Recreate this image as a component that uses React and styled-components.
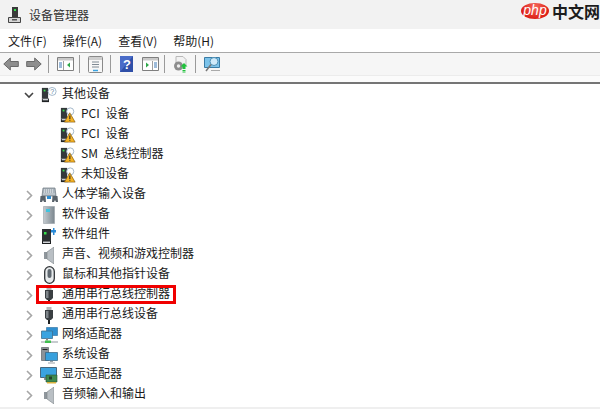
import styled, { createGlobalStyle } from "styled-components";

const GlobalStyle = createGlobalStyle`
  html, body { margin: 0; padding: 0; background: #fff; }
  body { font-family: "Noto Sans CJK SC", "Noto Sans", sans-serif; color: #1a1a1a; }
`;

const Win = styled.div`
  position: relative;
  width: 600px;
  height: 409px;
  overflow: hidden;
  background: #fff;
`;

const TitleBar = styled.div`
  height: 29px;
  display: flex;
  align-items: center;
  gap: 7px;
  padding-left: 7px;
  background: #f2f2f2;
  font-size: 12px;
  color: #333;
`;

const MenuBar = styled.div`
  height: 23px;
  display: flex;
  align-items: center;
  gap: 16px;
  padding-left: 8px;
  border-bottom: 1px solid #a9a9a9;
  background: #fff;
  font-size: 12px;
  line-height: 23px;
`;

const ToolBar = styled.div`
  height: 22px;
  display: flex;
  align-items: center;
  padding-left: 3px;
  background: #f6f6f6;
`;

const ToolGroup = styled.div`
  display: flex;
  align-items: center;
  gap: ${(p) => p.$gap || 0}px;
  padding-right: ${(p) => p.$pad || 0}px;
  margin-right: 8px;
  height: 18px;
  border-right: ${(p) => (p.$last ? "none" : "1px solid #9a9a9a")};
`;

const ToolEnd = styled.div`
  height: 6px;
  background: #fbfbfb;
  border-top: 1px solid #ececec;
  border-bottom: 2px solid #757575;
`;

const Tree = styled.div`
  margin-top: -2px;
`;

const Row = styled.div`
  height: 20px;
  display: flex;
  align-items: center;
  padding-left: ${(p) => (p.$child ? 59 : 21)}px;
  font-size: 12px;
  word-spacing: ${(p) => (p.$child ? 3 : 0)}px;
  white-space: nowrap;
`;

const Caret = styled.span`
  width: 16px;
  height: 20px;
  margin: 6px 3px 0 0;
  display: flex;
  align-items: center;
  justify-content: center;
  flex: none;
`;

const IconSlot = styled.span`
  width: 18px;
  height: 18px;
  display: flex;
  align-items: center;
  justify-content: center;
  flex: none;
  margin: 6px 4px 0 0;
`;

const Highlight = styled.div`
  position: absolute;
  left: 36px;
  top: 285px;
  width: 140px;
  height: 19px;
  box-sizing: border-box;
  border: 3px solid #f00000;
`;

const BottomBar = styled.div`
  position: absolute;
  left: 0;
  right: 0;
  bottom: 0;
  height: 2px;
  background: #efefef;
`;

const Brand = styled.div`
  position: absolute;
  left: 521px;
  top: 3px;
  display: flex;
  align-items: center;
  gap: 3px;
`;

const BrandBadge = styled.span`
  width: 28px;
  height: 16px;
  border-radius: 50%;
  background: radial-gradient(ellipse at 50% 25%, #f56a5c, #dd1f17 70%);
  color: #fff;
  font: italic 14px/14px "Liberation Sans", sans-serif;
  text-align: center;
`;

const BrandText = styled.span`
  font-size: 16px;
  font-weight: 700;
  line-height: 16px;
  color: #1c1c1c;
`;

const ChevronRight = () => (
  <svg width="7" height="11" viewBox="0 0 7 11">
    <path d="M1 1l4.500 4.500L1 10" fill="none" stroke="#a6a6a6" strokeWidth="1.600" />
  </svg>
);

const ChevronDown = () => (
  <svg width="10" height="7" viewBox="0 0 10 7">
    <path d="M1 1l4 4 4-4" fill="none" stroke="#444" strokeWidth="1.600" />
  </svg>
);

const Tower = () => (
  <>
    <path d="M1 1h7v12H1z" fill="#33383b" />
    <path d="M3 3h2v2H3z" fill="#3be04f" />
    <path d="M1 13h8v4H1z" fill="#1f2224" />
    <path d="M2 13.500h6v1.500H2z" fill="#c9cdd0" />
  </>
);

const Other = () => (
  <svg width="16" height="16" viewBox="0 0 18 18">
    <Tower />
    <circle cx="12.500" cy="5" r="4.500" fill="#fff" stroke="#9ab0c4" />
    <text x="10.300" y="8" fontSize="8" fill="#5f7f9d" fontFamily="Liberation Sans">?</text>
  </svg>
);

const Warn = () => (
  <svg width="16" height="16" viewBox="0 0 18 18">
    <Tower />
    <circle cx="11.500" cy="5" r="4" fill="#fff" stroke="#9ab0c4" />
    <path d="M11 6.500L17 17H5z" fill="#f5b324" stroke="#7e5208" strokeWidth=".7" />
    <path d="M10.500 9.500h1.200v4h-1.200zM10.500 14.300h1.200v1.300h-1.200z" fill="#222" />
  </svg>
);

const Keyboard = () => (
  <svg width="18" height="16" viewBox="0 0 18 16">
    <path d="M3 1h12l1 8H2z" fill="#a9b3bb" stroke="#6c767e" strokeWidth=".7" />
    <path d="M4 3h10M4 5h10M3.500 7h11" stroke="#f2f4f6" strokeDasharray="1 1" />
    <path d="M0.500 9h5l.5 6H4l-1-2-1 2H0z" fill="#59626a" />
    <path d="M12.500 9h5l.5 6h-2l-1-2-1 2h-2z" fill="#59626a" />
    <path d="M7 9h4v3H7z" fill="#2f8dd0" />
  </svg>
);

const Drive = () => (
  <svg width="12" height="18" viewBox="0 0 12 18">
    <defs>
      <linearGradient id="dg" x1="0" x2="1">
        <stop offset="0" stopColor="#c4cbd0" />
        <stop offset="1" stopColor="#7c878f" />
      </linearGradient>
    </defs>
    <path d="M.500.500h11v17H.500z" fill="url(#dg)" stroke="#98a0a6" strokeWidth=".6" />
    <path d="M3 3h4v3H3z" fill="#3fc4e0" />
  </svg>
);

const Component = () => (
  <svg width="14" height="17" viewBox="0 0 14 17">
    <path d="M0 2h9v12H0z" fill="#2c3033" />
    <path d="M2 5h2.500v2.500H2z" fill="#35e04c" />
    <path d="M0 14h9v3H0z" fill="#1c1e20" />
    <path d="M1 14.500h7V16H1z" fill="#d4d7da" />
    <path d="M9 3h2V1h1.500v2H14v2.500h-1.500V8H11V5.500H9z" fill="#2a8bd8" />
  </svg>
);

const Speaker = () => (
  <svg width="10" height="17" viewBox="0 0 10 17">
    <path d="M0 5h3v7H0z" fill="#8f969c" />
    <path d="M3 5l7-5v17l-7-5z" fill="#b9bfc4" stroke="#7c8388" strokeWidth=".6" />
  </svg>
);

const Mouse = () => (
  <svg width="11" height="18" viewBox="0 0 11 18">
    <rect x=".7" y=".7" width="9.600" height="16.600" rx="4.800" fill="#e7eaec" stroke="#2f3336" strokeWidth="1.300" />
    <rect x="3.500" y="3" width="4" height="9" rx="2" fill="#5f6870" />
  </svg>
);

const Plug = () => (
  <svg width="10" height="17" viewBox="0 0 10 17">
    <path d="M2.500 0h5v3h-5z" fill="#b5b8ba" />
    <path d="M1 3h8v8l-2 2H3l-2-2z" fill="#3a3f43" />
    <path d="M2 4h2.500v7H2z" fill="#7e858a" />
    <path d="M5 13v4" stroke="#1f2224" strokeWidth="2" />
  </svg>
);

const Network = () => (
  <svg width="17" height="17" viewBox="0 0 17 17">
    <path d="M5.500.500h11v8h-11z" fill="#2f8fd0" stroke="#2a6d9c" strokeWidth=".6" />
    <path d="M.500 4h11v7.500H.500z" fill="#3aa3e0" stroke="#3d6f90" strokeWidth=".8" />
    <path d="M5 11.500h2v2H5z" fill="#888" />
    <path d="M0 14h17v2H0z" fill="#c7cbcf" />
    <path d="M4 13.500h6V16H4z" fill="#3fc04e" />
  </svg>
);

const SystemIcon = () => (
  <svg width="17" height="17" viewBox="0 0 17 17">
    <path d="M.500.500h7v13h-7z" fill="#8c9298" stroke="#4e5358" strokeWidth=".6" />
    <path d="M1.500 2h5v1h-5z" fill="#222" />
    <path d="M4.500 5.500h12v8h-12z" fill="#37a0dd" stroke="#33607e" strokeWidth=".7" />
    <path d="M9 14h3v1H9zM7 15.500h7v1H7z" fill="#9aa1a7" />
  </svg>
);

const Display = () => (
  <svg width="18" height="18" viewBox="0 0 18 18">
    <path d="M.500 1.500h16v10H.500z" fill="#3aa3e0" stroke="#46687f" />
    <path d="M4 11.500h3V14H4z" fill="#8a9095" />
    <path d="M6 9h11v7H6z" fill="#3e8a50" stroke="#27522f" strokeWidth=".6" />
    <path d="M9 10.500h3v3H9z" fill="#23402a" />
    <path d="M7 16h9v1.500H7z" fill="#d8b03c" />
  </svg>
);

const Arrow = ({ flip }) => (
  <svg width="16" height="14" viewBox="0 0 16 14" style={flip ? { transform: "scaleX(-1)" } : undefined}>
    <path d="M.800 7l6.500-6v3.500h8v5h-8V13z" fill="#8e8e8e" stroke="#6a6a6a" />
  </svg>
);

const Pane = ({ side, color }) => (
  <svg width="17" height="14" viewBox="0 0 17 14">
    <path d="M.500.500h16v13H.500z" fill="#fff" stroke="#7f7f7f" />
    <path d="M1 1h15v2.500H1z" fill="#c9c9c9" />
    <path d={side === "left" ? "M6.500 4v9" : "M10.500 4v9"} stroke="#a0a0a0" />
    <path d={side === "left" ? "M2 6h3M2 8h3M2 10h3" : "M12 6h3M12 8h3M12 10h3"} stroke="#3c79b5" />
    <path d={side === "left" ? "M13 5.500v5l-3-2.500z" : "M4 5.500v5l3-2.500z"} fill={color} />
  </svg>
);

const Sheet = () => (
  <svg width="15" height="17" viewBox="0 0 15 17">
    <rect x=".5" y=".5" width="14" height="16" rx="1" fill="#f7f7f7" stroke="#8a8a8a" />
    <path d="M1 1h13v3H1z" fill="#cfcfcf" />
    <path d="M4 6h7M4 8.500h7M4 11h7" stroke="#7f8a94" />
    <path d="M5 14.500h5" stroke="#3aa3e0" strokeWidth="1.500" />
  </svg>
);

const Help = () => (
  <svg width="14" height="16" viewBox="0 0 14 16">
    <path d="M1 0h13v16H1z" fill="#2f4fa8" />
    <path d="M1 0h13L1 16z" fill="#4a6cc8" />
    <text x="4" y="13" fontSize="13" fontWeight="700" fill="#fff" fontFamily="Liberation Sans">?</text>
  </svg>
);

const Update = () => (
  <svg width="15" height="17" viewBox="0 0 15 17">
    <path d="M3 .5h7l3 3v6H3z" fill="#f2f2f2" stroke="#b8b8b8" />
    <circle cx="5.500" cy="10" r="4.500" fill="#8d8d8d" />
    <circle cx="5.500" cy="10" r="1.700" fill="#eee" />
    <path d="M11 7l3.500 3.500H12.500V13h-3v-2.500H7.500z" fill="#20c23c" />
    <path d="M9.500 14h3v1h-3zM9.500 15.500h3v1h-3z" fill="#20c23c" />
  </svg>
);

const Scan = () => (
  <svg width="17" height="16" viewBox="0 0 17 16">
    <path d="M.5 1.500h15v10H.5z" fill="#7cc3ea" stroke="#3a7ca5" />
    <circle cx="10" cy="5.500" r="4" fill="#cfeafa" stroke="#4d8fb5" />
    <path d="M7 8.500L2 15" stroke="#777" strokeWidth="1.500" />
    <path d="M7 14.500h9" stroke="#aaa" />
  </svg>
);

const AppIcon = () => (
  <svg width="15" height="18" viewBox="0 0 15 18">
    <path d="M5 1h6v10H5z" fill="#3a3a3a" />
    <path d="M7 3h2v2H7z" fill="#35e04c" />
    <path d="M1.500 11.500h12v5h-12z" fill="#d6d6d6" stroke="#444" />
    <path d="M5 13h5v1.500H5z" fill="#555" />
  </svg>
);

const children = ["PCI 设备", "PCI 设备", "SM 总线控制器", "未知设备"];

const groups = [
  ["人体学输入设备", Keyboard],
  ["软件设备", Drive],
  ["软件组件", Component],
  ["声音、视频和游戏控制器", Speaker],
  ["鼠标和其他指针设备", Mouse],
  ["通用串行总线控制器", Plug],
  ["通用串行总线设备", Plug],
  ["网络适配器", Network],
  ["系统设备", SystemIcon],
  ["显示适配器", Display],
  ["音频输入和输出", Speaker],
];

export default function App() {
  return (
    <Win>
      <GlobalStyle />
      <TitleBar>
        <AppIcon />
        设备管理器
      </TitleBar>
      <MenuBar>
        <span>文件(F)</span>
        <span>操作(A)</span>
        <span>查看(V)</span>
        <span>帮助(H)</span>
      </MenuBar>
      <ToolBar>
        <ToolGroup $gap={7} $pad={6}>
          <Arrow />
          <Arrow flip />
        </ToolGroup>
        <ToolGroup $pad={5}>
          <Pane side="left" color="#2fa84a" />
        </ToolGroup>
        <ToolGroup $pad={7}>
          <Sheet />
        </ToolGroup>
        <ToolGroup $gap={9} $pad={5}>
          <Help />
          <Pane side="right" color="#2fa84a" />
        </ToolGroup>
        <ToolGroup $pad={7}>
          <Update />
        </ToolGroup>
        <ToolGroup $last>
          <Scan />
        </ToolGroup>
      </ToolBar>
      <ToolEnd />
      <Tree>
        <Row>
          <Caret>
            <ChevronDown />
          </Caret>
          <IconSlot>
            <Other />
          </IconSlot>
          其他设备
        </Row>
        {children.map((name, i) => (
          <Row $child key={i}>
            <IconSlot>
              <Warn />
            </IconSlot>
            {name}
          </Row>
        ))}
        {groups.map(([name, Icon]) => (
          <Row key={name}>
            <Caret>
              <ChevronRight />
            </Caret>
            <IconSlot>
              <Icon />
            </IconSlot>
            {name}
          </Row>
        ))}
      </Tree>
      <Highlight />
      <BottomBar />
      <Brand>
        <BrandBadge>php</BrandBadge>
        <BrandText>中文网</BrandText>
      </Brand>
    </Win>
  );
}
